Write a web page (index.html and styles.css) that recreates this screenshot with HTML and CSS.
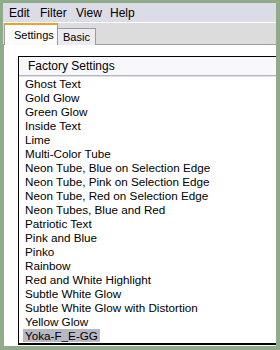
FILE: index.html
```html
<!DOCTYPE html>
<html>
<head>
<meta charset="utf-8">
<link rel="stylesheet" href="styles.css">
</head>
<body>
<div class="window">
  <div class="menubar">
    <span class="menu m-edit">Edit</span>
    <span class="menu m-filter">Filter</span>
    <span class="menu m-view">View</span>
    <span class="menu">Help</span>
  </div>
  <div class="tabstrip">
    <div class="tab active">Settings</div>
    <div class="tab">Basic</div>
  </div>
  <div class="panel">
    <div class="listbox">
      <div class="header">Factory Settings</div>
      <div class="items">
        <div class="item">Ghost Text</div>
        <div class="item">Gold Glow</div>
        <div class="item">Green Glow</div>
        <div class="item">Inside Text</div>
        <div class="item">Lime</div>
        <div class="item">Multi-Color Tube</div>
        <div class="item">Neon Tube, Blue on Selection Edge</div>
        <div class="item">Neon Tube, Pink on Selection Edge</div>
        <div class="item">Neon Tube, Red on Selection Edge</div>
        <div class="item">Neon Tubes, Blue and Red</div>
        <div class="item">Patriotic Text</div>
        <div class="item">Pink and Blue</div>
        <div class="item">Pinko</div>
        <div class="item">Rainbow</div>
        <div class="item">Red and White Highlight</div>
        <div class="item">Subtle White Glow</div>
        <div class="item">Subtle White Glow with Distortion</div>
        <div class="item">Yellow Glow</div>
        <div class="item"><span class="sel">Yoka-F_E-GG</span></div>
      </div>
    </div>
  </div>
</div>
</body>
</html>
```

FILE: styles.css
```css
html, body {
  margin: 0;
  padding: 0;
  background: #8fab8a;
  width: 280px;
  height: 350px;
  overflow: hidden;
}
.window {
  margin: 3px 4px 0 3px;
  height: 343px;
  display: flex;
  flex-direction: column;
  background: #ffffff;
  overflow: hidden;
}
.menubar {
  height: 19px;
  background: #dcdce6;
  border-bottom: 1px solid #ffffff;
  display: flex;
  align-items: center;
  font-family: "Liberation Sans", sans-serif;
  font-size: 12px;
  color: #000;
  padding-left: 6px;
}
.menu {
  display: inline-block;
}
.m-edit { width: 31px; }
.m-filter { width: 36px; }
.m-view { width: 34px; }
.tabstrip {
  height: 21px;
  background: #dcdcdc;
  border-bottom: 1px solid #a0a0a0;
  display: flex;
  align-items: flex-end;
  padding-left: 1px;
  font-family: "Liberation Sans", sans-serif;
  font-size: 11px;
}
.tab {
  box-sizing: border-box;
  height: 17px;
  width: 38px;
  padding-left: 5px;
  background: #ececf0;
  border: 1px solid #9c9ca8;
  border-bottom: none;
  border-left: none;
  display: flex;
  align-items: center;
  margin-bottom: -1px;
}
.tab.active {
  width: 54px;
  height: 22px;
  background: #fcfcfe;
  border-top: 2px solid #f0a030;
  border-left: 1px solid #9c9ca8;
  padding-left: 9px;
  position: relative;
  z-index: 1;
}
.panel {
  flex: 1;
  border-left: 1px solid #a0a0a0;
  padding: 11px 0 0 14px;
  background: #ffffff;
}
.listbox {
  border-top: 1px solid #000;
  border-left: 1px solid #000;
  border-bottom: 2px solid #000;
  font-family: "Liberation Sans", sans-serif;
  font-size: 11.7px;
  color: #000;
}
.header {
  height: 18px;
  background: #f8f8fc;
  border-bottom: 1px solid #b4b4c0;
  box-shadow: 0 1px 0 #e0e0e8;
  display: flex;
  align-items: center;
  padding-left: 9px;
  font-size: 12px;
}
.items {
  padding-top: 1px;
}
.item {
  height: 14px;
  line-height: 14px;
  padding-left: 6px;
  white-space: nowrap;
}
.sel {
  background: #b8b8c4;
  padding: 0 2px 0 2px;
  margin-left: -2px;
}
```
